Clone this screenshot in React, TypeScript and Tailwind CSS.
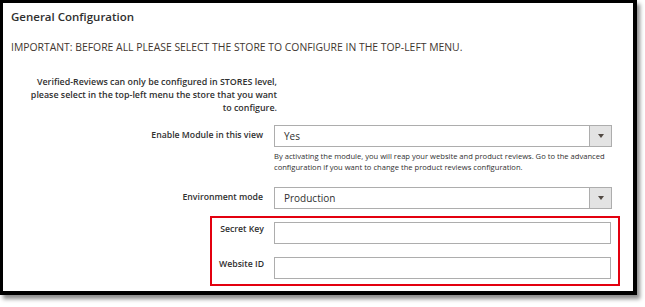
import React from "react";

function Select({ value }: { value: string }) {
  return (
    <div className="flex h-[22px] w-[338px] border border-[#adadad] bg-white">
      <div className="flex-1 pl-[9px] text-[10px] leading-[20px] text-[#303030]">{value}</div>
      <div className="flex w-[22px] items-center justify-center border-l border-[#adadad] bg-[#e3e3e3]">
        <svg width="6" height="4" viewBox="0 0 6 4">
          <path d="M0 0 L6 0 L3 4 Z" fill="#514943" />
        </svg>
      </div>
    </div>
  );
}

const label = "text-right text-[8.7px] font-semibold leading-[13px] text-[#303030]";

export default function App() {
  return (
    <div
      className="relative h-[307px] w-[645px] overflow-hidden bg-white"
      style={{ fontFamily: '"Open Sans", "Noto Sans", sans-serif' }}
    >
      <div className="h-[295px] w-[637px] border-b-[4px] border-l-[3px] border-r-[4px] border-t-[3px] border-black bg-white shadow-[3px_4px_4px_rgba(0,0,0,0.45)]">
        <div className="pl-[8px] pt-[6px] text-[11.5px] font-semibold leading-[16px] text-[#303030]">
          General Configuration
        </div>
        <div className="mt-[16px] whitespace-nowrap pl-[8px] text-[10.4px] leading-[12px] text-[#41362f]">
          IMPORTANT: BEFORE ALL PLEASE SELECT THE STORE TO CONFIGURE IN THE TOP-LEFT MENU.
        </div>
        <div className="mt-[22px] w-[274px] whitespace-nowrap text-right text-[8.9px] font-semibold leading-[13px] text-[#303030]">
          <div>Verified-Reviews can only be configured in STORES level,</div>
          <div>please select in the top-left menu the store that you want</div>
          <div>to configure.</div>
        </div>

        <div className="mt-[11px] flex">
          <div className={`w-[260px] pt-[4px] ${label}`}>Enable Module in this view</div>
          <div className="ml-[11px]">
            <Select value="Yes" />
            <div className="mt-[4px] w-[338px] whitespace-nowrap text-[7.6px] leading-[11px] text-[#303030]">
              <div>By activating the module, you will reap your website and product reviews. Go to the advanced</div>
              <div>configuration if you want to change the product reviews configuration.</div>
            </div>
          </div>
        </div>

        <div className="mt-[14px] flex">
          <div className={`w-[260px] pt-[4px] ${label}`}>Environment mode</div>
          <div className="ml-[11px]">
            <Select value="Production" />
          </div>
        </div>

        <div className="ml-[207px] mt-[7px] flex w-[410px] flex-col gap-[13px] border-2 border-[#e3000f] pb-[5px] pt-[4px]">
          <div className="flex">
            <div className={`w-[52px] pt-[1px] ${label}`}>Secret Key</div>
            <div className="ml-[10px] h-[22px] w-[337px] border border-[#adadad] bg-white" />
          </div>
          <div className="flex">
            <div className={`w-[52px] pt-[1px] ${label}`}>Website ID</div>
            <div className="ml-[10px] h-[22px] w-[337px] border border-[#adadad] bg-white" />
          </div>
        </div>
      </div>
    </div>
  );
}
